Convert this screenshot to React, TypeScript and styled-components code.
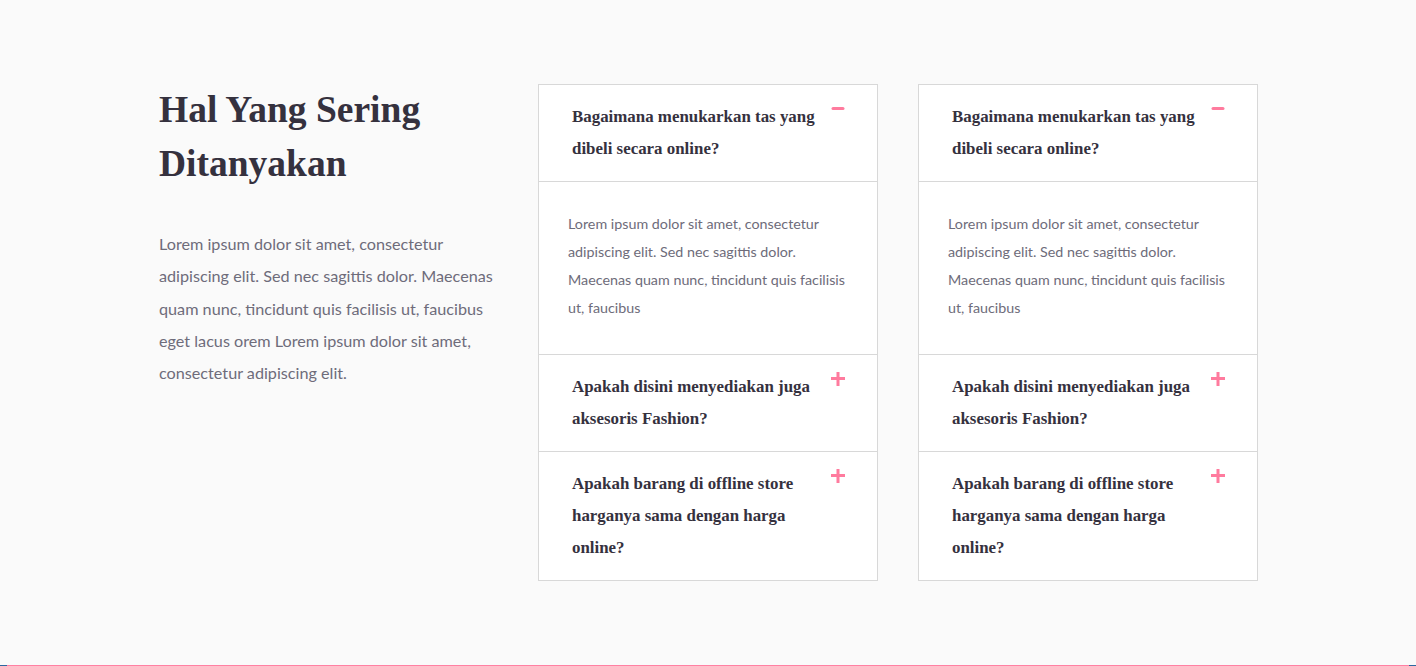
import React from "react";
import styled, { createGlobalStyle } from "styled-components";

const Global = createGlobalStyle`
  html, body { margin: 0; padding: 0; background: #fafafa; }
  * { box-sizing: border-box; }
`;

const Page = styled.div`
  min-height: 100vh;
  display: flex;
  flex-direction: column;
  background: #fafafa;
`;

const Section = styled.section`
  display: grid;
  grid-template-columns: 340px 340px 340px;
  column-gap: 40px;
  padding: 83px 158px 0;
  align-items: start;
`;

const Intro = styled.div`
  padding-left: 1px;
`;

const Title = styled.h2`
  margin: 0;
  font-family: "Liberation Serif", "Times New Roman", serif;
  font-weight: 700;
  font-size: 37.5px;
  line-height: 54px;
  color: #35313e;
`;

const Lead = styled.p`
  margin: 37px 0 0;
  font-family: Lato, "Open Sans", sans-serif;
  font-size: 16.2px;
  line-height: 32.3px;
  color: #6e6c7a;
`;

const Card = styled.div`
  margin-top: 1px;
  background: #fff;
  border: 1px solid #d8d8d8;
`;

const Item = styled.div`
  & + & {
    border-top: 1px solid #d8d8d8;
  }
`;

const Header = styled.div`
  position: relative;
  padding: 16px 50px 16px 33px;
  font-family: "Liberation Serif", "Times New Roman", serif;
  font-weight: 700;
  font-size: 16.9px;
  line-height: 32px;
  color: #35313e;
  cursor: pointer;
`;

const Toggle = styled.span<{ $open: boolean }>`
  position: absolute;
  right: 32px;
  top: ${(p) => (p.$open ? "18px" : "17px")};
  width: 14px;
  height: 14px;
  display: flex;
`;

const Body = styled.div`
  border-top: 1px solid #d8d8d8;
  padding: 28px 30px 32px 29px;
  font-family: Lato, "Open Sans", sans-serif;
  font-size: 14.3px;
  line-height: 28px;
  color: #6e6c7a;
`;

const BottomBar = styled.div`
  margin-top: auto;
  height: 1px;
  background: linear-gradient(
    to right,
    #2d67a0 0,
    #2d67a0 7px,
    #ff80a3 7px,
    #ff80a3 calc(100% - 7px),
    #2d67a0 calc(100% - 7px)
  );
`;

const PINK = "#ff7b9e";

const Icon = ({ open }: { open: boolean }) => (
  <svg width="14" height="14" viewBox="0 0 14 14">
    {open ? (
      <rect x="0.5" y="4" width="13" height="3" rx="1.5" fill={PINK} />
    ) : (
      <>
        <rect x="0" y="5" width="14" height="3" fill={PINK} />
        <rect x="5.5" y="0" width="3" height="14" fill={PINK} />
      </>
    )}
  </svg>
);

const faqs = [
  {
    q: "Bagaimana menukarkan tas yang dibeli secara online?",
    a: "Lorem ipsum dolor sit amet, consectetur adipiscing elit. Sed nec sagittis dolor. Maecenas quam nunc, tincidunt quis facilisis ut, faucibus",
    open: true,
  },
  {
    q: "Apakah disini menyediakan juga aksesoris Fashion?",
    a: "",
    open: false,
  },
  {
    q: "Apakah barang di offline store harganya sama dengan harga online?",
    a: "",
    open: false,
  },
];

const Accordion = () => (
  <Card>
    {faqs.map((f, i) => (
      <Item key={i}>
        <Header>
          {f.q}
          <Toggle $open={f.open}>
            <Icon open={f.open} />
          </Toggle>
        </Header>
        {f.open && <Body>{f.a}</Body>}
      </Item>
    ))}
  </Card>
);

export default function App() {
  return (
    <Page>
      <Global />
      <Section>
        <Intro>
          <Title>Hal Yang Sering Ditanyakan</Title>
          <Lead>
            Lorem ipsum dolor sit amet, consectetur adipiscing elit. Sed nec
            sagittis dolor. Maecenas quam nunc, tincidunt quis facilisis ut,
            faucibus eget lacus orem Lorem ipsum dolor sit amet, consectetur
            adipiscing elit.
          </Lead>
        </Intro>
        <Accordion />
        <Accordion />
      </Section>
      <BottomBar />
    </Page>
  );
}
